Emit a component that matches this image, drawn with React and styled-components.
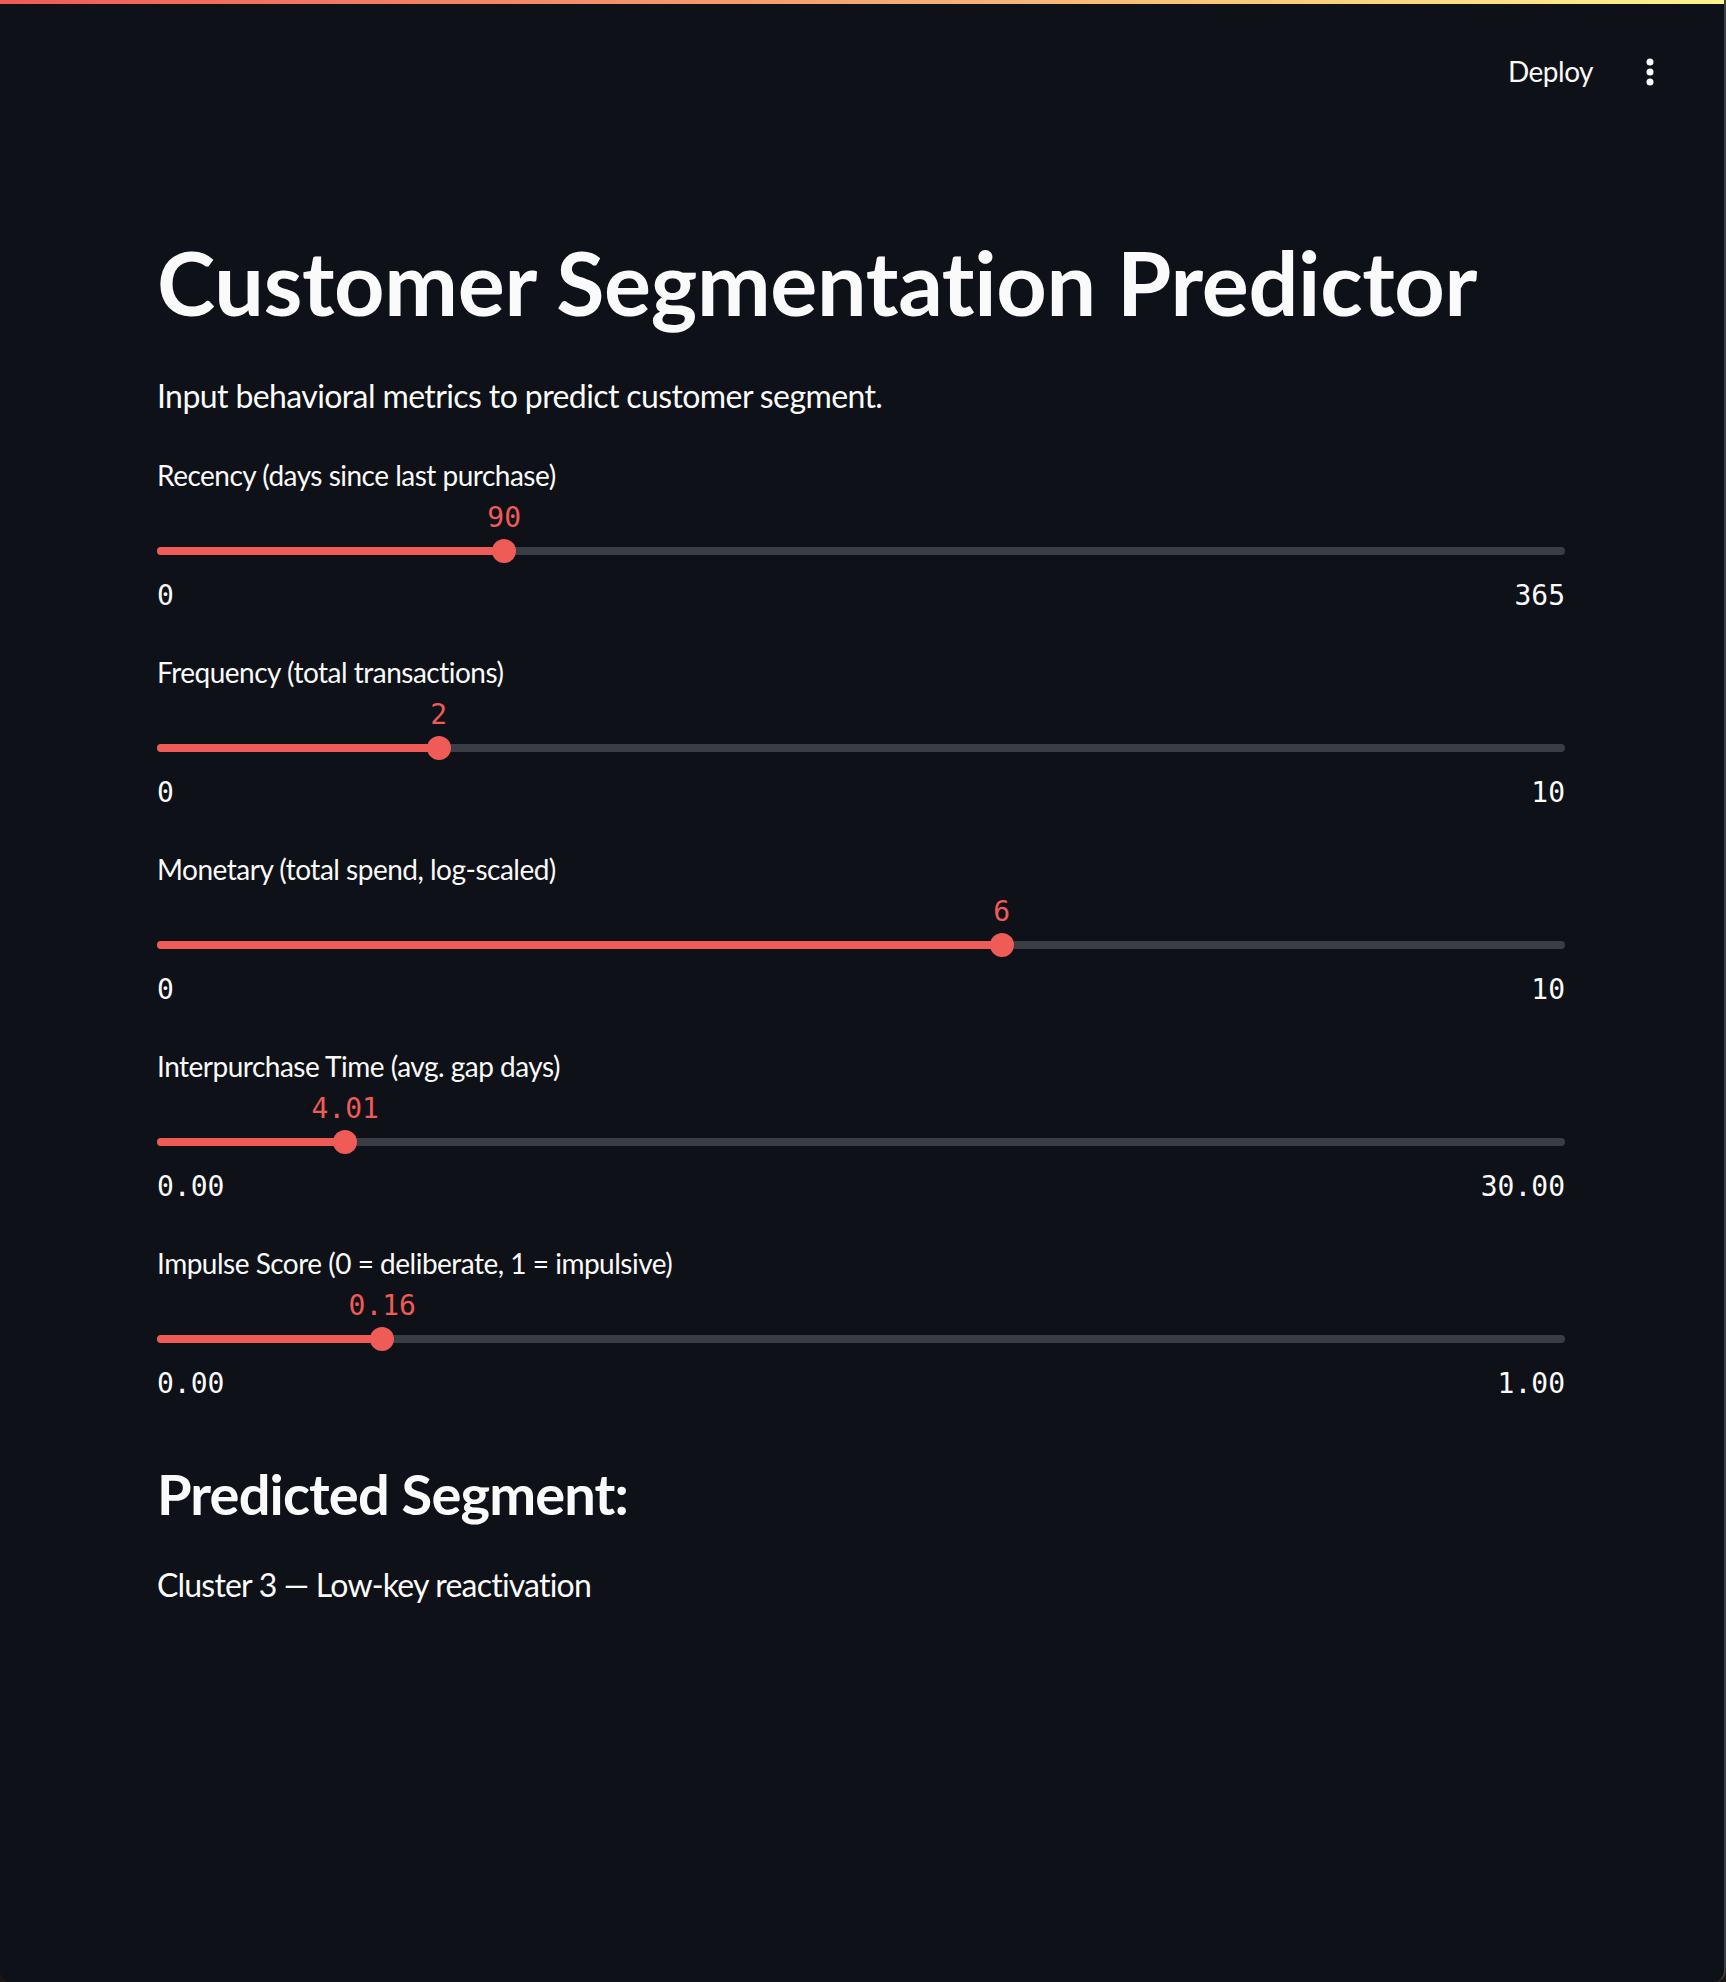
import React from 'react';
import styled, { createGlobalStyle } from 'styled-components';

const GlobalStyle = createGlobalStyle`
  html, body {
    margin: 0;
    padding: 0;
    background: #1b1714;
  }
  * {
    box-sizing: border-box;
  }
`;

const Frame = styled.div`
  min-height: 100vh;
  background: #0e1117;
  color: #fafafa;
  font-family: Lato, "Noto Sans", sans-serif;
  border-right: 2px solid #3e3f45;
  border-radius: 0 0 12px 12px;
  overflow: hidden;
`;

const Decoration = styled.div`
  height: 4px;
  background: linear-gradient(90deg, #ef5b56, #fef38c);
`;

const Header = styled.header`
  height: 136px;
  display: flex;
  align-items: center;
  justify-content: flex-end;
  gap: 37px;
  padding-right: 54px;
`;

const DeployButton = styled.span`
  font-size: 28px;
  line-height: 1.2;
  letter-spacing: -0.5px;
  color: #fafafa;
  cursor: pointer;
`;

const MenuButton = styled.span`
  width: 40px;
  height: 40px;
  display: flex;
  align-items: center;
  justify-content: center;
  cursor: pointer;
`;

const Main = styled.main`
  width: 1408px;
  margin: 0 auto;
  padding: 90px 0 200px;
  transform: translateX(-1px);
`;

const Title = styled.h1`
  margin: 0 0 34px;
  font-size: 88px;
  font-weight: 700;
  line-height: 1.2;
  letter-spacing: -0.3px;
`;

const Lead = styled.p`
  margin: 0 0 34px;
  font-size: 32px;
  line-height: 1.6;
  letter-spacing: -0.6px;
`;

const SliderBlock = styled.div`
  margin-bottom: 40px;
`;

const SliderLabel = styled.div`
  font-size: 28px;
  line-height: 40px;
  height: 40px;
  letter-spacing: -0.5px;
`;

const TrackArea = styled.div`
  position: relative;
  height: 80px;
  padding-top: 52px;
`;

const Track = styled.div`
  height: 8px;
  border-radius: 4px;
  background: #3b3d45;
  overflow: hidden;
`;

const Fill = styled.div`
  height: 100%;
  background: #ef5b56;
`;

const Thumb = styled.div`
  position: absolute;
  top: 44px;
  width: 24px;
  height: 24px;
  border-radius: 50%;
  background: #ef5b56;
  transform: translateX(-50%);
`;

const ThumbValue = styled.div`
  position: absolute;
  top: 7px;
  transform: translateX(-50%);
  font-family: "DejaVu Sans Mono", "Liberation Mono", monospace;
  font-size: 28px;
  line-height: 32px;
  color: #ef5b56;
  white-space: nowrap;
`;

const Ticks = styled.div`
  margin-top: 5px;
  display: flex;
  justify-content: space-between;
  font-family: "DejaVu Sans Mono", "Liberation Mono", monospace;
  font-size: 28px;
  line-height: 32px;
  color: #fafafa;
`;

const SubHeading = styled.h3`
  margin: 60px 0 32px;
  font-size: 56px;
  font-weight: 700;
  line-height: 1.2;
  letter-spacing: -0.85px;
`;

const Result = styled.p`
  margin: 0;
  font-size: 32px;
  line-height: 1.6;
  letter-spacing: -0.8px;
`;

const sliders = [
  { label: 'Recency (days since last purchase)', value: '90', pct: 90 / 365, min: '0', max: '365' },
  { label: 'Frequency (total transactions)', value: '2', pct: 0.2, min: '0', max: '10' },
  { label: 'Monetary (total spend, log-scaled)', value: '6', pct: 0.6, min: '0', max: '10' },
  { label: 'Interpurchase Time (avg. gap days)', value: '4.01', pct: 4.01 / 30, min: '0.00', max: '30.00' },
  { label: 'Impulse Score (0 = deliberate, 1 = impulsive)', value: '0.16', pct: 0.16, min: '0.00', max: '1.00' },
];

const Slider = ({ label, value, pct, min, max }) => (
  <SliderBlock>
    <SliderLabel>{label}</SliderLabel>
    <TrackArea>
      <ThumbValue style={{ left: `${pct * 100}%` }}>{value}</ThumbValue>
      <Track>
        <Fill style={{ width: `${pct * 100}%` }} />
      </Track>
      <Thumb style={{ left: `${pct * 100}%` }} />
    </TrackArea>
    <Ticks>
      <span>{min}</span>
      <span>{max}</span>
    </Ticks>
  </SliderBlock>
);

export default () => (
  <>
    <GlobalStyle />
    <Frame>
      <Decoration />
      <Header>
        <DeployButton>Deploy</DeployButton>
        <MenuButton>
          <svg width="8" height="28" viewBox="0 0 8 28">
            <circle cx="4" cy="4" r="3.5" fill="#fafafa" />
            <circle cx="4" cy="14" r="3.5" fill="#fafafa" />
            <circle cx="4" cy="24" r="3.5" fill="#fafafa" />
          </svg>
        </MenuButton>
      </Header>
      <Main>
        <Title>Customer Segmentation Predictor</Title>
        <Lead>Input behavioral metrics to predict customer segment.</Lead>
        {sliders.map((s) => (
          <Slider key={s.label} {...s} />
        ))}
        <SubHeading>Predicted Segment:</SubHeading>
        <Result>Cluster 3 — Low-key reactivation</Result>
      </Main>
    </Frame>
  </>
);
